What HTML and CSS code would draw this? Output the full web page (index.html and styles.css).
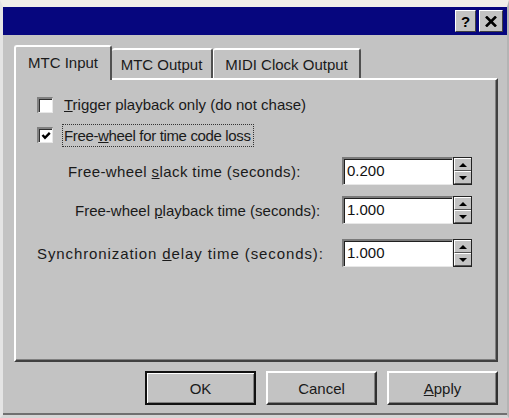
FILE: index.html
```html
<!DOCTYPE html>
<html>
	<head>
		<meta charset="UTF-8">
		<title>MTC</title>
		<link rel="stylesheet" href="styles.css">
	</head>
	<body>
		<div class="window">
			<div class="titlebar">
				<span class="tb-btn tb-help">?</span>
				<span class="tb-btn tb-close">
					<svg width="12" height="11" viewBox="0 0 12 11"><path d="M1 0.5 L11 10.5 M11 0.5 L1 10.5" stroke="#000" stroke-width="2.6"/></svg>
				</span>
			</div>
			<div class="content">
				<ul class="tabs">
					<li class="tab ac">MTC Input</li>
					<li class="tab">MTC Output</li>
					<li class="tab">MIDI Clock Output</li>
				</ul>
				<div class="panel">
					<div class="check">
						<span class="box"></span>
						<span class="label"><u>T</u>rigger playback only (do not chase)</span>
					</div>
					<div class="check">
						<span class="box"><svg width="10" height="10" viewBox="0 0 10 10"><path d="M1.5 4 L4 6.8 L8.8 1.8" fill="none" stroke="#000" stroke-width="2.4"/></svg></span>
						<span class="label focus">Free-<u>w</u>heel for time code loss</span>
					</div>
					<div class="field slack">
						<span class="field-label">Free-wheel <u>s</u>lack time (seconds):</span>
						<div class="spin-input">
							<span class="edit">0.200</span>
							<span class="spinner"><i class="up"></i><i class="down"></i></span>
						</div>
					</div>
					<div class="field playback">
						<span class="field-label">Free-wheel <u>p</u>layback time (seconds):</span>
						<div class="spin-input">
							<span class="edit">1.000</span>
							<span class="spinner"><i class="up"></i><i class="down"></i></span>
						</div>
					</div>
					<div class="field sync">
						<span class="field-label">Synchronization <u>d</u>elay time (seconds):</span>
						<div class="spin-input">
							<span class="edit">1.000</span>
							<span class="spinner"><i class="up"></i><i class="down"></i></span>
						</div>
					</div>
				</div>
				<div class="actions">
					<button class="btn default">OK</button>
					<button class="btn">Cancel</button>
					<button class="btn"><u>A</u>pply</button>
				</div>
			</div>
		</div>
	</body>
</html>
```

FILE: styles.css
```css
* {margin:0; padding:0; box-sizing:border-box;}
li {list-style:none;}
body {background:#f0efe9; font-family:"Liberation Sans", Arial, sans-serif; font-size:15px; color:#1a1a1a;}

.window {width:509px; height:418px; background:#c3c3c3; border-top:7px solid #f0efe9; border-left:3px solid #e4e4e4; border-right:2px solid #b4b4b4; border-bottom:3px solid #d6d6d6; display:flex; flex-direction:column;}

.titlebar {height:28px; background:#06067e; display:flex; justify-content:flex-end; align-items:center; gap:3px; padding-right:4px;}
.tb-btn {width:21px; height:22px; background:#c3c3c3; border-top:1px solid #fff; border-left:1px solid #fff; border-right:1px solid #404040; border-bottom:1px solid #404040; display:flex; align-items:center; justify-content:center; font-weight:bold; font-size:15px; color:#000;}
.tb-close {width:24px;}

.content {flex:1; padding:10px 0 0 11px; border-bottom:2px solid #707070;}

.tabs {display:flex; align-items:flex-end; height:33px; position:relative; z-index:2;}
.tab {height:30px; padding-top:6px; text-align:center; background:#c3c3c3; border-top:2px solid #fff; border-left:2px solid #fff; border-right:2px solid #505050; border-radius:3px 3px 0 0;}
.tab:nth-child(1) {width:98px; height:35px; margin-bottom:-2px; padding-top:7px;}
.tab:nth-child(2) {width:101px; border-left:none;}
.tab:nth-child(3) {width:148px; border-left:1px solid #fff;}

.panel {width:484px; height:284px; border-top:2px solid #fff; border-left:2px solid #fff; border-right:2px solid #404040; border-bottom:2px solid #404040; box-shadow:inset -1px -1px 0 #808080; padding:17px 0 0 21px;}

.check {display:flex; align-items:center; height:16px; margin-bottom:14px;}
.box {width:16px; height:16px; background:#fff; border-top:2px solid #808080; border-left:2px solid #808080; border-right:1px solid #e8e8e8; border-bottom:1px solid #e8e8e8; box-shadow:inset 1px 1px 0 #303030; display:flex; align-items:center; justify-content:center; margin-right:11px;}
.label {line-height:18px;}
.focus {border:1px dotted #333; padding:2px 2px 1px 1px; margin-left:-2px; letter-spacing:-0.35px;}

.field {display:flex; align-items:center; height:28px;}
.field-label {width:305px;}
.slack {margin-top:1px;}
.slack .field-label {padding-left:31px; letter-spacing:0.4px;}
.playback {margin-top:11px;}
.playback .field-label {padding-left:38px;}
.sync {margin-top:15px;}
.sync .field-label {letter-spacing:0.9px;}

.spin-input {display:flex; align-items:center;}
.edit {width:111px; height:28px; background:#fff; border-top:2px solid #7a7a7a; border-left:2px solid #7a7a7a; border-right:1px solid #e8e8e8; border-bottom:1px solid #e8e8e8; box-shadow:inset 1px 1px 0 #202020; padding:3px 0 0 3px; color:#111;}
.spinner {width:19px; height:28px; display:flex; flex-direction:column; border:1px solid #222; background:#c3c3c3;}
.spinner i {flex:1; display:flex; align-items:center; justify-content:center; border-top:1px solid #fff; border-left:1px solid #fff; border-bottom:1px solid #555;}
.spinner i::before {content:""; border-left:4px solid transparent; border-right:4px solid transparent;}
.spinner .up::before {border-bottom:4px solid #000;}
.spinner .down::before {border-top:4px solid #000;}

.actions {width:484px; display:flex; justify-content:flex-end; gap:10px; margin-top:9px;}
.btn {width:111px; height:34px; font:inherit; color:#1a1a1a; background:#c3c3c3; border-top:2px solid #fff; border-left:2px solid #fff; border-right:2px solid #303030; border-bottom:2px solid #303030; box-shadow:inset -1px -1px 0 #808080;}
.btn.default {border:2px solid #111; box-shadow:inset 1px 1px 0 #fff, inset -1px -1px 0 #808080;}
```
